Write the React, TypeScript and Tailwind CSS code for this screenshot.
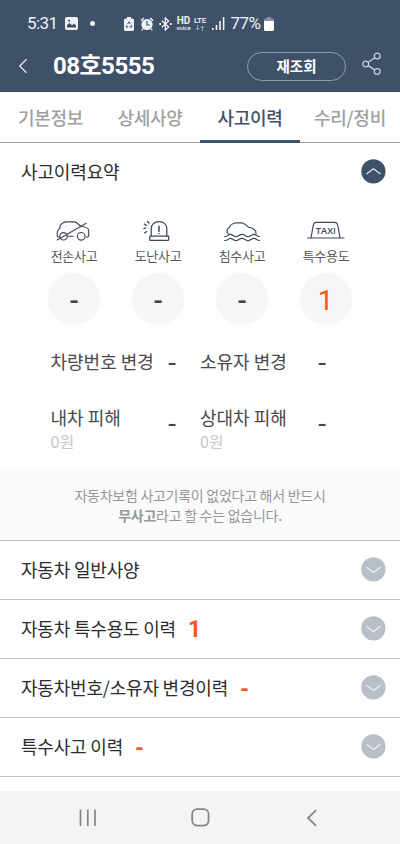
import React from "react";

const ICON = "#3f4757";

function Chevron({ up = false }: { up?: boolean }) {
  return (
    <svg width="25" height="25" viewBox="0 0 25 25" fill="none" className="shrink-0">
      <circle cx="12.4" cy="12.4" r="12.1" fill={up ? "#3f5169" : "#b8bfc8"} />
      <path
        d={up ? "M5.5 15 12.5 9.7 19.5 15" : "M5.5 10.3 12.5 15.5 19.5 10.3"}
        stroke={up ? "#e6ebf2" : "#eef3f8"}
        strokeWidth="1.1"
      />
    </svg>
  );
}

function WreckIcon() {
  return (
    <svg width="36" height="24" viewBox="0.8 0 36 24" fill="none" stroke={ICON} strokeWidth="1.15" strokeLinecap="round" strokeLinejoin="round">
      <path d="M4.5 18H2.2C1.6 14 2.5 10.5 4.8 9.3V6.5C7.5 3.2 9 2.8 11 2.8H19C21.5 2.8 23.5 5.5 25.5 7.3 30 7.8 33.5 9.3 33.5 11.5V16.5C33.5 17.8 32.5 18 31 18M12.5 17.2H18" />
      <circle cx="8.3" cy="17.3" r="3.7" />
      <circle cx="26" cy="17.3" r="3.8" />
      <path d="M2 21 31 4.3" />
    </svg>
  );
}

function SirenIcon() {
  return (
    <svg width="30" height="24" viewBox="0.8 0 30 24" fill="none" stroke={ICON} strokeWidth="1.25" strokeLinecap="round" strokeLinejoin="round">
      <path d="M9 17V10C9 5.5 12 2.6 16.8 2.6S24.6 5.5 24.6 10V17" />
      <rect x="7.5" y="17" width="19" height="4.3" rx=".5" />
      <path d="M16.8 7.2V12.2M16.8 14.4V14.6" strokeWidth="1.5" />
      <path d="M5.4 2.5 6.7 4.2M2.2 5.1 4.4 6.5M1.6 9.8 3.7 8.9M2.3 14 4.6 12.5" />
    </svg>
  );
}

function FloodIcon() {
  return (
    <svg width="38" height="24" viewBox="0 0 38 24" fill="none" stroke={ICON} strokeWidth="1.15" strokeLinecap="round" strokeLinejoin="round">
      <path d="M5.5 15C3.3 13.5 3.5 9.5 6.5 8.5 7 6.5 9.5 4.5 13 3.8H19C21.5 4.5 23.5 6.5 25.5 8.2 30 8.8 33.3 10.5 33 15" />
      <path d="M1.5 17.5C4.3 18 5.5 15.4 7.5 15.4S10.8 17.7 13 17.7 16.5 15.4 19 15.4 22.5 17.7 25 17.7 28.5 15.4 31 15.4 34 17.7 36.5 17.5" />
      <path d="M1.5 21.5C4.3 22 5.5 19.4 7.5 19.4S10.8 21.7 13 21.7 16.5 19.4 19 19.4 22.5 21.7 25 21.7 28.5 19.4 31 19.4 34 21.7 36.5 21.5" />
    </svg>
  );
}

function TaxiIcon() {
  return (
    <svg width="38" height="24" viewBox="1 0 38 24" fill="none" stroke={ICON} strokeWidth="1.15" strokeLinecap="round">
      <path d="M1.6 19H38M5 18.8 7.3 6.2C7.7 4.2 8.5 3.3 10.5 3.3H28.5C30.5 3.3 31.3 4.2 31.7 6.2L34 18.8" />
      <text x="19.8" y="15" textAnchor="middle" fontSize="9.5" fontFamily="Open Sans, sans-serif" fontWeight="600" fill={ICON} stroke="none" textLength="20" lengthAdjust="spacingAndGlyphs">TAXI</text>
    </svg>
  );
}

const summary = [
  { label: "전손사고", value: "-", icon: <WreckIcon /> },
  { label: "도난사고", value: "-", icon: <SirenIcon /> },
  { label: "침수사고", value: "-", icon: <FloodIcon /> },
  { label: "특수용도", value: "1", icon: <TaxiIcon /> },
];

const sections = [
  { label: "자동차 일반사양", value: "" },
  { label: "자동차 특수용도 이력", value: "1" },
  { label: "자동차번호/소유자 변경이력", value: "-" },
  { label: "특수사고 이력", value: "-" },
];

function StatusBar() {
  return (
    <div className="flex h-[47px] items-center pl-[27px] font-['Roboto',sans-serif] text-[#eef2f6]">
      <span className="w-[38px] text-[17px] tracking-[-0.55px]">5:31</span>
      <svg width="13" height="13" viewBox="0 0 13 13" className="mr-[12px]">
        <rect width="13" height="13" rx="2" fill="#eef2f6" />
        <path d="M2 10.5V8L4.5 6 7 8.3 9 6.8 11 8.5V10.5Z" fill="#3f5169" />
        <circle cx="4" cy="3.8" r="1" fill="#3f5169" />
      </svg>
      <span className="size-[5px] rounded-full bg-[#eef2f6]" />
      <svg width="10" height="14" viewBox="0 0 10 14" className="ml-[29px]">
        <path d="M3 0H7V1.5H8.5Q10 1.5 10 3V12.5Q10 14 8.5 14H1.5Q0 14 0 12.5V3Q0 1.5 1.5 1.5H3Z" fill="#eef2f6" />
        <path d="M3.5 7.2 5 4.8 6.5 7.2M7.2 8.2 8 10H5.5M4.2 10H2L2.8 8.2" fill="none" stroke="#3f5169" strokeWidth="1" />
      </svg>
      <svg width="14" height="14" viewBox="0 0 14 14" className="ml-[6px]" fill="none">
        <circle cx="7" cy="7.5" r="5.6" fill="#eef2f6" />
        <path d="M1 3.8 3.8 1M13 3.8 10.2 1M3 12 1.8 13.3M11 12 12.2 13.3" stroke="#eef2f6" strokeWidth="1.5" />
        <path d="M7 4V8H10" stroke="#3f5169" strokeWidth="1.2" />
      </svg>
      <svg width="13" height="14" viewBox="0 0 13 14" className="ml-[5px]" fill="none" stroke="#eef2f6" strokeWidth="1.3">
        <path d="M2.8 3.7 9.7 10 6.3 13V1L9.7 4 2.8 10.3" />
        <path d="M.3 7H2M11 7H12.7" strokeWidth="1.8" />
      </svg>
      <div className="ml-[4px] flex w-[15px] flex-col items-center">
        <span className="text-[10px] leading-[9px] font-bold">HD</span>
        <span className="text-[6px] leading-[6px] font-medium">voice</span>
      </div>
      <div className="ml-[2px] flex w-[14px] flex-col items-center">
        <span className="text-[8px] leading-[8px] font-medium tracking-[-0.3px]">LTE</span>
        <svg width="10" height="6" viewBox="0 0 10 6" fill="none" stroke="#9aa8ba" strokeWidth="1">
          <path d="M2.5 0V5M.5 3 2.5 5 4.5 3M7.5 6V1M5.5 3 7.5 1 9.5 3" />
        </svg>
      </div>
      <svg width="13" height="13" viewBox="0 0 13 13" className="ml-[5px]" fill="#eef2f6">
        <rect x="0" y="11" width="1.6" height="2" />
        <rect x="3.7" y="8" width="1.6" height="5" />
        <rect x="7.2" y="4" width="1.6" height="9" />
        <rect x="10.8" y="0" width="1.6" height="13" />
      </svg>
      <span className="ml-[5.5px] w-[33px] text-[17px] tracking-[-0.6px]">77%</span>
      <svg width="10" height="14" viewBox="0 0 10 14">
        <path d="M3 0H7V1.5H8.5Q10 1.5 10 3V5H0V3Q0 1.5 1.5 1.5H3Z" fill="#8492a3" />
        <path d="M0 4H10V12.5Q10 14 8.5 14H1.5Q0 14 0 12.5Z" fill="#fff" />
      </svg>
    </div>
  );
}

function Detail({ label, amount }: { label: string; amount?: string }) {
  return (
    <div className="flex justify-between pr-[24px]">
      <div className="whitespace-nowrap text-[18px] leading-[27px] text-[#4a4a4a]">
        {label}
        {amount && <p className="text-[16px] leading-[20px] text-[#c8c8c8]">{amount}</p>}
      </div>
      <span className={`font-['Roboto',sans-serif] text-[28px] leading-[28px] text-[#444] ${amount ? "mt-[6px]" : "mt-px"}`}>-</span>
    </div>
  );
}

export default function App() {
  return (
    <div className="flex h-[844px] w-[400px] flex-col overflow-hidden bg-[#fefefe] font-['Noto_Sans_CJK_KR',sans-serif] text-[#333]">
      <header className="h-[92px] shrink-0 bg-[#3f5169]">
        <StatusBar />
        <div className="flex h-[38px] items-center pl-[18px]">
          <svg width="10" height="16" viewBox="0 0 10 16" fill="none" stroke="#dfe6ee" strokeWidth="1.3">
            <path d="M8.5 1.2 1.8 8 8.5 14.8" />
          </svg>
          <h1 className="ml-[25px] w-[194px] font-['Roboto','Noto_Sans_CJK_KR',sans-serif] text-[24px] font-bold leading-[38px] tracking-[-0.5px] text-white">08호5555</h1>
          <button className="flex h-[29px] w-[99px] items-center justify-center rounded-full border border-[#8d9bb0] text-[14.5px] font-bold leading-none text-white">재조회</button>
          <svg width="20" height="24" viewBox="0 0 20 24" fill="none" stroke="#c3cedb" strokeWidth="1.3" className="ml-[16px] -mt-[4px]">
            <circle cx="15.2" cy="4" r="2.9" />
            <circle cx="3.8" cy="12" r="2.9" />
            <circle cx="15.2" cy="19.5" r="2.9" />
            <path d="M6.2 10.3 12.8 5.7M6.2 13.6 12.7 17.9" />
          </svg>
        </div>
      </header>

      <nav className="grid h-[51px] shrink-0 grid-cols-4 text-center text-[18px] font-medium leading-[50px] tracking-[-0.25px] text-[#a0a0a0]">
        <span className="h-[51px] border-b border-[#a0a3a8] pl-px">기본정보</span>
        <span className="h-[51px] border-b border-[#a0a3a8]">상세사양</span>
        <span className="h-[51px] border-b-3 border-[#3f5169] text-[#3f5169]">사고이력</span>
        <span className="h-[51px] border-b border-[#a0a3a8]">수리/정비</span>
      </nav>

      <section className="flex h-[397px] shrink-0 flex-col">
        <div className="flex h-[57px] items-center justify-between pr-[14px] pl-[21px]">
          <h2 className="pb-[2px] text-[18px] leading-[26px] tracking-[-0.15px] text-[#2c2c2c]">사고이력요약</h2>
          <Chevron up />
        </div>
        <div className="mt-[19px] grid grid-cols-4 px-[32px]">
          {summary.map((s) => (
            <div key={s.label} className="flex flex-col items-center">
              {s.icon}
              <span className="mt-[3px] text-[13px] leading-[20px] tracking-[-0.3px] text-[#5a5a5a]">{s.label}</span>
              <span className="mt-[7px] flex size-[52px] items-center justify-center rounded-full bg-[#f5f6f8] font-['Roboto',sans-serif]">
                {s.value === "1" ? (
                  <span className="pt-[4px] pr-[1px] text-[28px] leading-[34px] text-[#f4581c]">1</span>
                ) : (
                  <span className="pt-[4px] text-[27px] leading-[28px] font-medium text-[#444]">-</span>
                )}
              </span>
            </div>
          ))}
        </div>
        <div className="mt-[23px] grid grid-cols-[149.5px_150px] grid-rows-[56px_47px] pl-[50.5px]">
          <Detail label="차량번호 변경" />
          <Detail label="소유자 변경" />
          <Detail label="내차 피해" amount="0원" />
          <Detail label="상대차 피해" amount="0원" />
        </div>
        <p className="mt-auto h-[70px] bg-[#fafafa] pt-[15px] text-center text-[14px] leading-[20px] tracking-[-0.27px] text-[#969696]">
          자동차보험 사고기록이 없었다고 해서 반드시
          <br />
          <b className="font-bold">무사고</b>라고 할 수는 없습니다.
        </p>
      </section>

      <div className="shrink-0 border-b border-[#bfc1c4]">
        {sections.map((s) => (
          <div key={s.label} className="flex h-[58.9px] items-center border-t border-[#bfc1c4] pr-[14px] pl-[21px]">
            <span className="pb-[2px] text-[18px] leading-[26px] tracking-[-0.2px] text-[#2c2c2c]">{s.label}</span>
            {s.value && (
              <span className={`ml-[12px] font-['Roboto',sans-serif] text-[23px] font-bold leading-[27px] text-[#f4581c] ${s.value === "-" ? "pt-[3px]" : "pt-[2px]"}`}>{s.value}</span>
            )}
            <div className="ml-auto"><Chevron /></div>
          </div>
        ))}
      </div>

      <footer className="mt-auto grid h-[53px] shrink-0 grid-cols-[112px_112px_112px] items-center justify-items-center bg-[#f4f4f4] pl-[32px]">
        <svg width="18" height="18" viewBox="0 0 18 18" stroke="#858585" strokeWidth="1.7">
          <path d="M1.5 .5V17M8.8 .5V17M16 .5V17" />
        </svg>
        <svg width="19" height="19" viewBox="0 0 19 19" fill="none" stroke="#858585" strokeWidth="1.8">
          <rect x="1.2" y="1.2" width="16.4" height="16.4" rx="5" />
        </svg>
        <svg width="12" height="18" viewBox="0 0 12 18" fill="none" stroke="#858585" strokeWidth="1.8">
          <path d="M10.2 1.2 2 9 10.2 16.8" />
        </svg>
      </footer>
    </div>
  );
}
